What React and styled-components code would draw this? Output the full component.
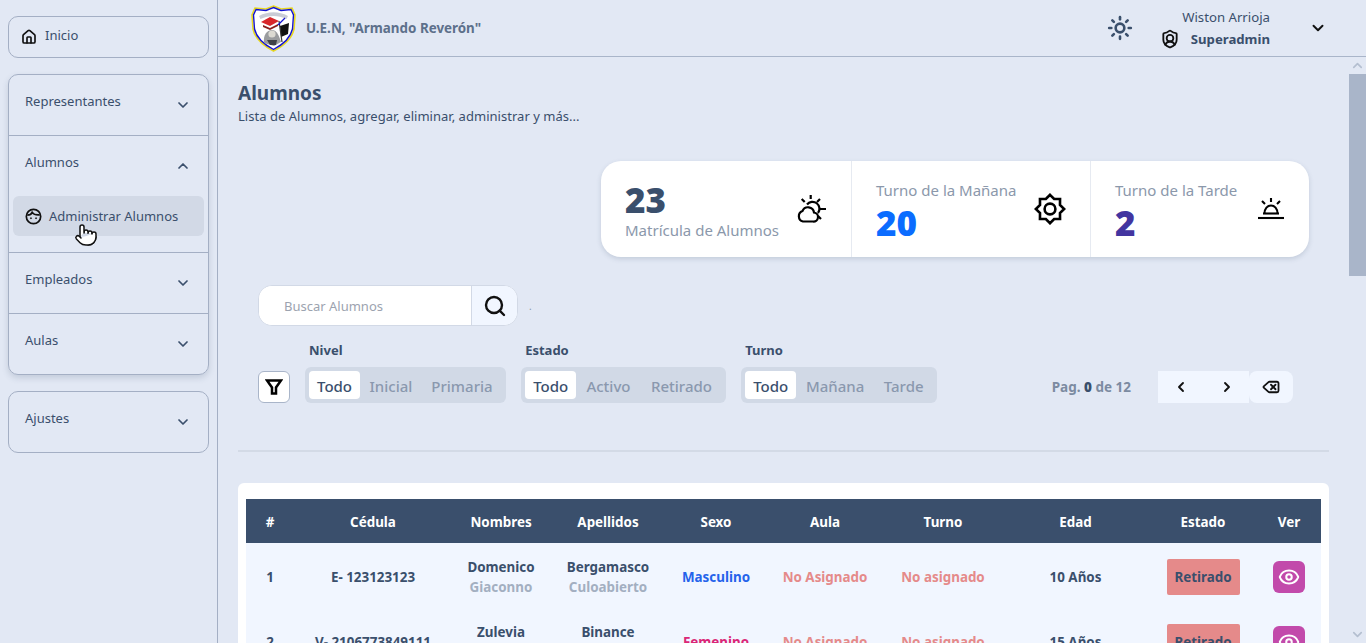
import React from 'react';
import styled, { createGlobalStyle } from 'styled-components';
import { House, Pointer, Search, ChevronLeft, ChevronRight, ChevronDown, ChevronUp, Eye, Sun, ShieldUser, Delete } from 'lucide-react';

const navy = '#3a4f6c';

const GlobalStyle = createGlobalStyle`
  html, body {
    margin: 0;
    height: 100%;
    overflow: hidden;
    background: #e2e8f4;
    font-family: "Noto Sans", "Liberation Sans", sans-serif;
    color: ${navy};
  }
  * { box-sizing: border-box; }
`;

const Shell = styled.div`
  display: flex;
  height: 100vh;
`;

const Sidebar = styled.aside`
  position: relative;
  flex: 0 0 218px;
  padding: 16px 8px;
  border-right: 1px solid #a4afc4;
  display: flex;
  flex-direction: column;
  gap: 16px;
`;

const NavCard = styled.div`
  width: 201px;
  border: 1px solid #a4afc4;
  border-radius: 10px;
  box-shadow: ${({ $raised }) => ($raised ? '0 3px 6px rgba(58, 79, 108, 0.18)' : 'none')};
`;

const HomeLink = styled.a`
  display: flex;
  align-items: flex-start;
  gap: 8px;
  height: 40px;
  padding: 10px 12px;
  font-size: 13px;
  line-height: 17px;
`;

const NavItem = styled.div`
  padding: 0 16px;
  & + & { border-top: 1px solid #a4afc4; }
`;

const NavHead = styled.div`
  display: flex;
  justify-content: space-between;
  height: 60px;
  padding-top: 17px;
  font-size: 13px;
  line-height: 18px;
  svg { margin: 5px 1px 0 0; }
`;

const SubLink = styled.div`
  display: flex;
  align-items: center;
  gap: 7px;
  height: 40px;
  margin: 0 -12px 16px;
  padding: 0 12px;
  border-radius: 6px;
  background: #d2d9e6;
  font-size: 13px;
  color: ${navy};
`;

const HandCursor = styled(Pointer)`
  position: absolute;
  left: 74px;
  top: 223px;
  fill: #fff;
  color: #111;
`;

const Column = styled.div`
  flex: 1;
  min-width: 0;
  display: flex;
  flex-direction: column;
`;

const Header = styled.header`
  flex: 0 0 57px;
  display: flex;
  align-items: center;
  padding: 0 39px 1px 32px;
  border-bottom: 1px solid #a9b5c9;
`;

const Brand = styled.div`
  display: flex;
  align-items: center;
  gap: 9px;
  margin-right: auto;
  font-size: 13.4px;
  font-weight: 700;
  color: #5d708b;
`;

const ThemeIcon = styled(Sun)`
  color: ${navy};
  margin-right: 27px;
`;

const UserBox = styled.div`
  width: 110px;
  text-align: right;
  font-size: 13.2px;
  line-height: 22px;
`;

const UserRole = styled.div`
  display: flex;
  justify-content: space-between;
  align-items: center;
  font-weight: 700;
  svg { color: #111; }
`;

const UserCaret = styled(ChevronDown)`
  color: #111;
  margin-left: 39px;
`;

const Body = styled.div`
  flex: 1;
  min-height: 0;
  display: flex;
`;

const Main = styled.main`
  flex: 1;
  min-width: 0;
  overflow: hidden;
  padding: 24px 20px 0;
`;

const ScrollRail = styled.div`
  flex: 0 0 17px;
  display: flex;
  flex-direction: column;
  justify-content: space-between;
`;

const ScrollCap = styled.div`
  display: flex;
  align-items: center;
  justify-content: center;
  height: 17px;
  color: #b4bfd0;
`;

const ScrollThumb = styled.div`
  height: 202px;
  margin-bottom: auto;
  background: #a9b5c9;
`;

const PageTitle = styled.h1`
  margin: 0;
  font-size: 19px;
  line-height: 24px;
  font-weight: 700;
`;

const PageSub = styled.p`
  margin: 1px 0 0;
  font-size: 13px;
  line-height: 20px;
  letter-spacing: 0.03px;
`;

const Stats = styled.section`
  display: flex;
  width: 708px;
  height: 96px;
  margin: 35px 20px 0 auto;
  border-radius: 20px;
  background: #fff;
  box-shadow: 0 2px 5px rgba(58, 79, 108, 0.18);
`;

const Stat = styled.div`
  display: flex;
  justify-content: space-between;
  align-items: center;
  width: ${({ $w }) => $w}px;
  padding: 0 24px;
  & + & { border-left: 1px solid #e6eaf1; }
`;

const StatText = styled.div`
  padding-top: ${({ $top }) => $top}px;
`;

const StatLabel = styled.div`
  font-size: 15px;
  line-height: 20px;
  color: #8b98ab;
`;

const StatValue = styled.div`
  margin-top: ${({ $below }) => ($below ? 3 : 0)}px;
  font-size: 35px;
  line-height: 40px;
  font-weight: 900;
  color: ${({ $color }) => $color};
`;

const StatIcon = styled.div`
  display: flex;
`;

const SearchRow = styled.div`
  display: flex;
  align-items: center;
  margin: 28px 0 0 20px;
`;

const SearchBox = styled.div`
  display: flex;
  width: 260px;
  height: 41px;
  border: 1px solid #d2d9e6;
  border-radius: 14px;
  overflow: hidden;
  background: #fff;
`;

const SearchInput = styled.input`
  flex: 1;
  min-width: 0;
  border: 0;
  outline: 0;
  padding: 1px 25px 0;
  font: 13px "Noto Sans", sans-serif;
  &::placeholder { color: #9ca3af; }
`;

const SearchButton = styled.button`
  flex: 0 0 46px;
  display: flex;
  align-items: center;
  justify-content: center;
  padding: 0;
  border: 0;
  border-left: 1px solid #d2d9e6;
  background: #f1f6ff;
  color: #111;
`;

const Dot = styled.span`
  margin-left: 11px;
  font-size: 10px;
  color: #8b98ab;
`;

const FilterRow = styled.div`
  display: flex;
  align-items: flex-end;
  margin: 14px 0 0 20px;
`;

const FilterButton = styled.button`
  display: flex;
  align-items: center;
  justify-content: center;
  width: 32px;
  height: 32px;
  margin-right: 15px;
  padding: 0;
  border: 1px solid #a9b5c9;
  border-radius: 6px;
  background: #fff;
`;

const FilterGroup = styled.div`
  margin-right: 15px;
`;

const FilterLabel = styled.div`
  margin: 0 0 7px 4px;
  font-size: 13px;
  line-height: 20px;
  font-weight: 700;
`;

const Tabs = styled.div`
  display: flex;
  height: 36px;
  padding: 4px;
  border-radius: 6px;
  background: #d1d9e6;
`;

const Tab = styled.div`
  display: flex;
  align-items: center;
  padding: 1px ${({ $pad }) => $pad}px 0;
  border-radius: 4px;
  font-size: 15px;
  font-weight: 500;
  background: ${({ $active }) => ($active ? '#fff' : 'transparent')};
  color: ${({ $active }) => ($active ? navy : '#8a98ae')};
`;

const Pager = styled.div`
  display: flex;
  align-items: center;
  margin-left: auto;
  margin-right: 36px;
`;

const PagerText = styled.div`
  margin-right: 27px;
  font-size: 13.5px;
  font-weight: 700;
  color: #7c8ba1;
  b { color: ${navy}; }
`;

const PagerButton = styled.button`
  display: flex;
  align-items: center;
  justify-content: center;
  width: ${({ $w }) => $w}px;
  height: 32px;
  padding: 0;
  border: 0;
  border-radius: ${({ $round }) => ($round ? '8px' : '0')};
  background: #f1f6ff;
  color: #111;
`;

const Divider = styled.hr`
  height: 2px;
  margin: 47px 0 31px;
  border: 0;
  background: #d3dae6;
`;

const TableCard = styled.section`
  padding: 16px 8px 0;
  border-radius: 6px;
  background: #fff;
`;

const Table = styled.table`
  width: 100%;
  table-layout: fixed;
  border-collapse: collapse;
  background: #f1f6ff;
  font-size: 13.4px;
  font-weight: 700;
  text-align: center;
`;

const HeadCell = styled.th`
  height: 44px;
  padding: 2px 0 0;
  background: ${navy};
  color: #fff;
  font-weight: 700;
`;

const Cell = styled.td`
  height: 65px;
  padding: 2px 0 0;
  line-height: 20px;
  color: ${({ $color }) => $color || navy};
`;

const Muted = styled.div`
  color: #a3afc1;
`;

const StatusBadge = styled.span`
  display: inline-flex;
  align-items: center;
  justify-content: center;
  width: 73px;
  height: 36px;
  border-radius: 2px;
  background: #e58a8a;
  vertical-align: middle;
`;

const ViewButton = styled.button`
  display: inline-flex;
  align-items: center;
  justify-content: center;
  width: 32px;
  height: 32px;
  padding: 0;
  border: 0;
  border-radius: 6px;
  background: #c24aab;
  color: #fff;
  vertical-align: middle;
`;

const Logo = () => (
  <svg width="47" height="48" viewBox="0 0 47 48">
    <path d="M23.5 2 L31 5 L42 4 L45 11 L44 25 C42 35 33 42 23.5 47 C14 42 5 35 3 25 L2 11 L5 4 L16 5Z" fill="#fff" stroke="#e8d820" strokeWidth="1.6" />
    <path d="M23.5 3.5 L31 6.5 L41 5.5 L43.5 11 L42.5 25 C40.5 34 32 41 23.5 45.5 C15 41 6.5 34 4.5 25 L3.5 11 L6 5.5 L16 6.5Z" fill="none" stroke="#1414d0" strokeWidth="1.4" />
    <path d="M9 12 C18 7 29 7 38 12 L36.5 15 C28 11 19 11 10.5 15Z" fill="#c9ccd6" />
    <path d="M11 18 L20 13 L29 17 L20 22Z" fill="#d8262a" />
    <path d="M13 21 L20 24 L28 20 L28 22 L20 26 L13 23Z" fill="#8a1c1c" />
    <path d="M30 22 L39 19 L38 30 L31 33Z" fill="#111" />
    <path d="M29 17 L32 38" stroke="#333" strokeWidth="1.2" />
    <path d="M35 14 L28 21" stroke="#1414d0" strokeWidth="1.2" />
    <path d="M14 39 C13 31 17 26 22 26 C27 26 29 32 31 38 L24 42Z" fill="#9a9c9e" />
    <circle cx="22" cy="30" r="3.6" fill="#dcdad2" />
    <path d="M17 36 L27 36 L26 41 L20 41Z" fill="#3f4247" />
  </svg>
);

const KidFace = () => (
  <svg width="17" height="17" viewBox="0 0 18 18" fill="none" stroke="#111" strokeWidth="1.8">
    <circle cx="9" cy="9" r="7.6" />
    <path d="M2.5 7.5 C5 7.5 6.8 6.5 7.6 4.6 C9 6.8 12 7.6 15.5 7.3" />
    <circle cx="6.3" cy="10.8" r="0.6" fill="#111" strokeWidth="0.8" />
    <circle cx="11.7" cy="10.8" r="0.6" fill="#111" strokeWidth="0.8" />
  </svg>
);

const FunnelIcon = () => (
  <svg width="18" height="18" viewBox="0 0 18 18" fill="none" stroke="#000" strokeWidth="2.5">
    <path d="M2 2.5 H16 L11 9.5 V15.5 H7 V9.5Z" />
  </svg>
);

const CloudSunIcon = () => (
  <svg width="30" height="28" viewBox="0 0 30 28" fill="none" stroke="#000" strokeWidth="2.2">
    <path d="M6 26.5 H16 a4.5 4.5 0 0 0 1 -9 a6 6 0 0 0 -11.5 -1.5 a5.5 5.5 0 0 0 .5 10.5 Z" />
    <path d="M10 9.5 A6.5 6.5 0 0 1 21 18" />
    <path d="M13.7 0 V4 M4.7 4 L7.7 7 M23 4 L20 7 M23 14 H29 M21 21 L24 24" />
  </svg>
);

// eight-pointed star outline around a circle
const starPoints = Array.from({ length: 16 }, (_, i) => {
  const angle = (i * Math.PI) / 8 - Math.PI / 2;
  const r = i % 2 === 0 ? 14.2 : 10.8;
  return `${(16 + r * Math.cos(angle)).toFixed(2)},${(16 + r * Math.sin(angle)).toFixed(2)}`;
}).join(' ');

const StarSunIcon = () => (
  <svg width="32" height="32" viewBox="0 0 32 32" fill="none" stroke="#000" strokeWidth="2.6">
    <polygon points={starPoints} />
    <circle cx="16" cy="16" r="5.4" />
  </svg>
);

const DuskIcon = () => (
  <svg width="28" height="28" viewBox="0 0 28 28" fill="none" stroke="#000" strokeWidth="2.1">
    <path d="M1 23 H27" />
    <path d="M6 18.5 H22" />
    <path d="M7.5 18.5 C7.5 13.5 10.5 10.5 14 10.5 C17.5 10.5 20.5 13.5 20.5 18.5" />
    <path d="M14 3 V7 M5 6 L8 9 M23 6 L20 9" />
  </svg>
);

const filters = [
  { label: 'Nivel', pad: 9.5, options: ['Inicial', 'Primaria'] },
  { label: 'Estado', pad: 10.25, options: ['Activo', 'Retirado'] },
  { label: 'Turno', pad: 9.75, options: ['Mañana', 'Tarde'] },
];

const widths = [48, 158, 98, 116, 100, 118, 118, 147, 108, 64];
const heads = ['#', 'Cédula', 'Nombres', 'Apellidos', 'Sexo', 'Aula', 'Turno', 'Edad', 'Estado', 'Ver'];

const rows = [
  { id: 1, doc: 'E- 123123123', name: ['Domenico', 'Giaconno'], last: ['Bergamasco', 'Culoabierto'], sex: 'Masculino', sexColor: '#2563eb', age: '10 Años' },
  { id: 2, doc: 'V- 2106773849111', name: ['Zulevia', ''], last: ['Binance', ''], sex: 'Femenino', sexColor: '#db2777', age: '15 Años' },
];

const menu = ['Representantes', 'Alumnos', 'Empleados', 'Aulas'];

const App = () => (
  <Shell>
    <GlobalStyle />
    <Sidebar>
      <NavCard>
        <HomeLink>
          <House size={16} color="#111" strokeWidth={2.5} style={{ marginTop: 2 }} />
          Inicio
        </HomeLink>
      </NavCard>
      <NavCard $raised>
        {menu.map((item) => (
          <NavItem key={item}>
            <NavHead>
              {item}
              {item === 'Alumnos' ? <ChevronUp size={16} strokeWidth={2.6} /> : <ChevronDown size={16} strokeWidth={2.6} />}
            </NavHead>
            {item === 'Alumnos' && (
              <SubLink>
                <KidFace />
                Administrar Alumnos
              </SubLink>
            )}
          </NavItem>
        ))}
      </NavCard>
      <NavCard>
        <NavItem>
          <NavHead>
            Ajustes
            <ChevronDown size={16} strokeWidth={2.6} />
          </NavHead>
        </NavItem>
      </NavCard>
      <HandCursor size={24} strokeWidth={1.5} />
    </Sidebar>
    <Column>
      <Header>
        <Brand>
          <Logo />
          U.E.N, "Armando Reverón"
        </Brand>
        <ThemeIcon size={26} strokeWidth={2.4} />
        <UserBox>
          Wiston Arrioja
          <UserRole>
            <ShieldUser size={20} strokeWidth={2.2} />
            Superadmin
          </UserRole>
        </UserBox>
        <UserCaret size={18} strokeWidth={2.6} />
      </Header>
      <Body>
        <Main>
          <PageTitle>Alumnos</PageTitle>
          <PageSub>Lista de Alumnos, agregar, eliminar, administrar y más...</PageSub>

          <Stats>
            <Stat $w={250}>
              <StatText $top={2}>
                <StatValue $color={navy}>23</StatValue>
                <StatLabel>Matrícula de Alumnos</StatLabel>
              </StatText>
              <StatIcon><CloudSunIcon /></StatIcon>
            </Stat>
            <Stat $w={239}>
              <StatText $top={5}>
                <StatLabel>Turno de la Mañana</StatLabel>
                <StatValue $below $color="#0b6cff">20</StatValue>
              </StatText>
              <StatIcon><StarSunIcon /></StatIcon>
            </Stat>
            <Stat $w={219}>
              <StatText $top={5}>
                <StatLabel>Turno de la Tarde</StatLabel>
                <StatValue $below $color="#4335a0">2</StatValue>
              </StatText>
              <StatIcon><DuskIcon /></StatIcon>
            </Stat>
          </Stats>

          <SearchRow>
            <SearchBox>
              <SearchInput placeholder="Buscar Alumnos" />
              <SearchButton><Search size={24} strokeWidth={2.4} /></SearchButton>
            </SearchBox>
            <Dot>.</Dot>
          </SearchRow>

          <FilterRow>
            <FilterButton><FunnelIcon /></FilterButton>
            {filters.map((group) => (
              <FilterGroup key={group.label}>
                <FilterLabel>{group.label}</FilterLabel>
                <Tabs>
                  <Tab $active $pad={8}>Todo</Tab>
                  {group.options.map((option) => (
                    <Tab key={option} $pad={group.pad}>{option}</Tab>
                  ))}
                </Tabs>
              </FilterGroup>
            ))}
            <Pager>
              <PagerText>Pag. <b>0</b> de 12</PagerText>
              <PagerButton $w={46}><ChevronLeft size={16} strokeWidth={2.8} /></PagerButton>
              <PagerButton $w={45}><ChevronRight size={16} strokeWidth={2.8} /></PagerButton>
              <PagerButton $w={44} $round><Delete size={18} strokeWidth={2.4} /></PagerButton>
            </Pager>
          </FilterRow>

          <Divider />

          <TableCard>
            <Table>
              <colgroup>
                {widths.map((w, i) => <col key={i} width={w} />)}
              </colgroup>
              <thead>
                <tr>{heads.map((h) => <HeadCell key={h}>{h}</HeadCell>)}</tr>
              </thead>
              <tbody>
                {rows.map((r) => (
                  <tr key={r.id}>
                    <Cell>{r.id}</Cell>
                    <Cell>{r.doc}</Cell>
                    <Cell>{r.name[0]}<Muted>{r.name[1] || '\u00a0'}</Muted></Cell>
                    <Cell>{r.last[0]}<Muted>{r.last[1] || '\u00a0'}</Muted></Cell>
                    <Cell $color={r.sexColor}>{r.sex}</Cell>
                    <Cell $color="#e58a8a">No Asignado</Cell>
                    <Cell $color="#e58a8a">No asignado</Cell>
                    <Cell>{r.age}</Cell>
                    <Cell><StatusBadge>Retirado</StatusBadge></Cell>
                    <Cell><ViewButton><Eye size={22} strokeWidth={2.2} /></ViewButton></Cell>
                  </tr>
                ))}
              </tbody>
            </Table>
          </TableCard>
        </Main>
        <ScrollRail>
          <ScrollCap><ChevronUp size={15} strokeWidth={2.6} /></ScrollCap>
          <ScrollThumb />
          <ScrollCap><ChevronDown size={15} strokeWidth={2.6} /></ScrollCap>
        </ScrollRail>
      </Body>
    </Column>
  </Shell>
);

export default App;
